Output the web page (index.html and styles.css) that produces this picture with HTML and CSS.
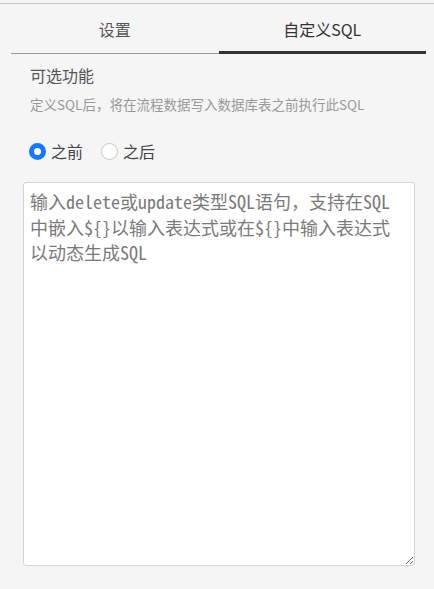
FILE: index.html
```html
<!DOCTYPE html>
<html lang="zh-CN">
<head>
    <meta charset="UTF-8">
    <meta name="viewport" content="width=device-width, initial-scale=1.0">
    <title>自定义SQL</title>
    <link rel="stylesheet" href="styles.css">
</head>
<body>
    <div class="panel">
        <div class="tabs">
            <div class="tab">设置</div>
            <div class="tab active">自定义SQL</div>
        </div>

        <div class="section">
            <div class="section-title">可选功能</div>
            <div class="section-desc">定义SQL后，将在流程数据写入数据库表之前执行此SQL</div>

            <div class="radio-group">
                <label class="radio">
                    <input type="radio" name="when" checked>
                    <span class="radio-dot"></span>
                    <span>之前</span>
                </label>
                <label class="radio">
                    <input type="radio" name="when">
                    <span class="radio-dot"></span>
                    <span>之后</span>
                </label>
            </div>
        </div>

        <textarea class="sql-input" placeholder="输入delete或update类型SQL语句，支持在SQL&#10;中嵌入${}以输入表达式或在${}中输入表达式&#10;以动态生成SQL"></textarea>
    </div>
</body>
</html>
```

FILE: styles.css
```css
body, html {
    margin: 0;
    background-color: #f5f5f5;
    font-family: "Noto Sans CJK SC", "Noto Sans", sans-serif;
}
body {
    padding-top: 3px;
}
.panel {
    border-top: 1px solid #c4c4c4;
    height: 585px;
    box-sizing: border-box;
}
.tabs {
    display: flex;
    margin: 0 8px 0 11px;
    border-bottom: 1px solid #999;
}
.tab {
    flex: 1;
    height: 49px;
    line-height: 50px;
    text-align: center;
    font-size: 16px;
    color: #555;
}
.tab.active {
    color: #333;
    border-bottom: 3px solid #333;
    margin-bottom: -1px;
    height: 47px;
}
.section {
    padding: 10px 30px 0 29px;
}
.section-title {
    font-size: 16px;
    color: #555;
    line-height: 22px;
    padding-left: 1px;
}
.section-desc {
    font-size: 13.5px;
    color: #999;
    line-height: 18px;
    margin-top: 9px;
    padding-left: 1px;
}
.radio-group {
    display: flex;
    gap: 18px;
    margin-top: 27px;
}
.radio {
    display: flex;
    align-items: center;
    gap: 5px;
    font-size: 16px;
    color: #444;
    line-height: 22px;
    cursor: pointer;
}
.radio input {
    display: none;
}
.radio-dot {
    width: 15px;
    height: 15px;
    border: 1px solid #c8c8c8;
    border-radius: 50%;
    background-color: white;
}
.radio input:checked + .radio-dot {
    width: 7px;
    height: 7px;
    border: 5px solid #1677ff;
}
.sql-input {
    display: block;
    width: 392px;
    height: 384px;
    margin: 20px 0 0 23px;
    padding: 6px 6px;
    box-sizing: border-box;
    border: 1px solid #d4d4d4;
    border-radius: 3px;
    background-color: white;
    font-family: "Noto Sans Mono CJK SC", "Liberation Mono", "Noto Sans CJK SC", monospace;
    font-size: 18px;
    line-height: 25.5px;
    color: #333;
    resize: vertical;
    outline: none;
}
.sql-input::placeholder {
    color: #7a7a7a;
}
```
